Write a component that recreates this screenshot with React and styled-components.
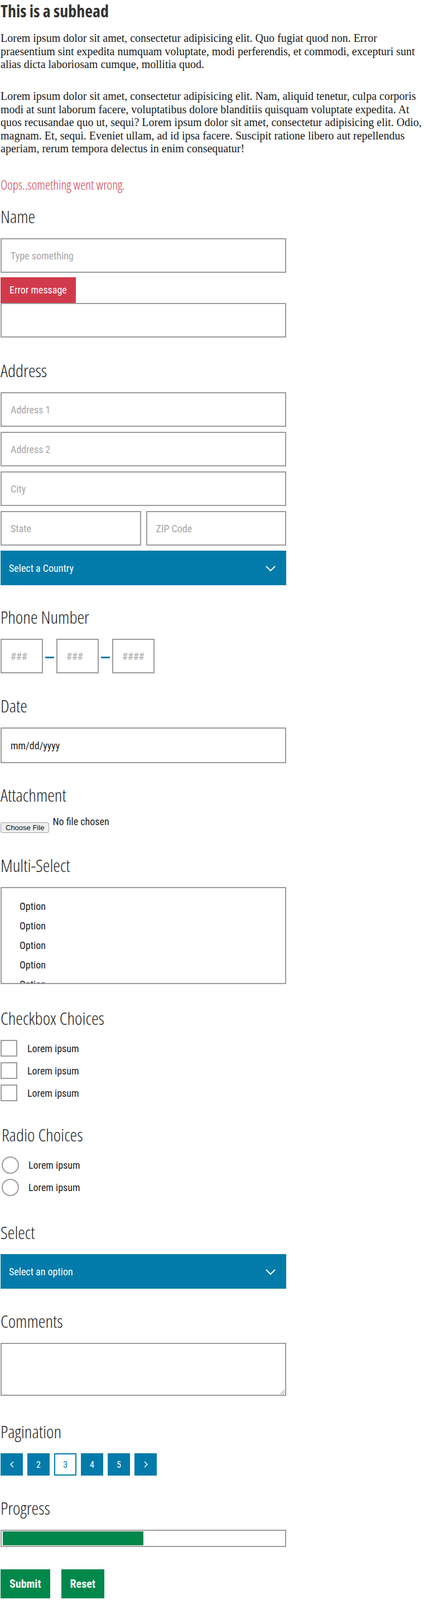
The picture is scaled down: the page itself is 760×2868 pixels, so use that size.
import React from 'react';
import styled, { createGlobalStyle } from 'styled-components';

// no Oswald here: the variable width axis of Open Sans / Roboto gives the condensed look
const displayFont = `font-family: "Open Sans", "Roboto", sans-serif; font-stretch: 75%; font-variation-settings: "wdth" 75;`;
const uiFont = `font-family: "Roboto", "Open Sans", sans-serif; font-stretch: 75%; font-variation-settings: "wdth" 75;`;
const serif = `"Liberation Serif", "DejaVu Serif", serif`;

const blue = '#027bab';
const green = '#00884b';
const red = '#d13a4b';
const line = '#9b9b9b';

const GlobalStyle = createGlobalStyle`
    * {
        box-sizing: border-box;
    }
    body {
        margin: 0;
        background: #fff;
        font-family: "Open Sans", sans-serif;
        color: #222;
    }
`;

const Page = styled.div`
    width: 760px;
    padding: 0 0 2px 1px;
`;

const Subhead = styled.h2`
    margin: 2px 0 0;
    ${displayFont}
    font-weight: 700;
    font-size: 30px;
    line-height: 36px;
    color: #333;
`;

const Copy = styled.p`
    margin: ${(p) => p.$top}px 0 0;
    font-family: ${serif};
    font-size: 20px;
    line-height: 23.5px;
    color: #1a1a1a;
`;

const Alert = styled.p`
    margin: 38.5px 0 0;
    ${displayFont}
    font-weight: 300;
    font-size: 23px;
    line-height: 28px;
    color: ${red};
`;

const Form = styled.form`
    display: flex;
    flex-direction: column;
    align-items: flex-start;
`;

const Section = styled.div`
    width: 512px;
    margin-top: ${(p) => p.$top}px;
    padding-left: ${(p) => p.$indent || 0}px;
`;

const Label = styled.h3`
    margin: 0 0 21px;
    ${displayFont}
    font-weight: 300;
    font-size: 32px;
    line-height: 36px;
    color: #1e1e1e;
`;

const Stack = styled.div`
    display: flex;
    flex-direction: column;
    gap: ${(p) => p.$gap}px;
`;

const Pair = styled.div`
    display: grid;
    grid-template-columns: 1fr 1fr;
    gap: 9px;
`;

const TextInput = styled.input`
    display: block;
    width: 100%;
    height: ${(p) => p.$height || 62}px;
    margin: 0;
    padding: 0 16px;
    border: 2px solid ${line};
    border-radius: 0;
    background: #fff;
    ${uiFont}
    font-size: 18px;
    color: #222;
    outline: none;

    &::placeholder {
        color: #a6a6a6;
    }
`;

const ErrorBadge = styled.div`
    align-self: flex-start;
    height: 46px;
    padding: 0 16px;
    background: ${red};
    color: #fff;
    ${uiFont}
    font-size: 18px;
    line-height: 46px;
`;

const ErrorField = styled.div`
    display: flex;
    flex-direction: column;
`;

const SelectWrap = styled.div`
    position: relative;
    width: 100%;
`;

const NativeSelect = styled.select`
    appearance: none;
    display: block;
    width: 100%;
    height: 62px;
    margin: 0;
    padding: 0 48px 0 15px;
    border: 0;
    border-radius: 0;
    background: ${blue};
    color: #fff;
    ${uiFont}
    font-size: 18px;
    outline: none;
`;

const Chevron = styled.svg`
    position: absolute;
    right: 19px;
    top: 50%;
    margin-top: -4px;
    pointer-events: none;
`;

const PhoneRow = styled.div`
    display: flex;
    align-items: center;
`;

const PhoneInput = styled(TextInput)`
    width: 76px;
`;

const Dash = styled.span`
    width: 16px;
    height: 3px;
    margin: 5px 4px 0;
    background: ${blue};
`;

const FileRow = styled.div`
    display: flex;
    align-items: flex-start;
    gap: 6px;
`;

const FileButton = styled.button`
    margin-top: 10px;
    height: 19px;
    padding: 0 8px;
    border: 1px solid #a3a3a3;
    border-radius: 3px;
    background: #efefef;
    font-family: "Liberation Sans", sans-serif;
    font-size: 13px;
    line-height: 17px;
    color: #111;
`;

const FileName = styled.span`
    ${uiFont}
    font-size: 18px;
    line-height: 18px;
    color: #222;
`;

const ListBox = styled.div`
    height: 174px;
    padding: 15px 0 0 32px;
    border: 2px solid ${line};
    overflow: hidden;
`;

const ListOption = styled.div`
    ${uiFont}
    font-size: 18px;
    line-height: 35px;
    color: #222;
`;

const Choices = styled.div`
    display: flex;
    flex-direction: column;
    gap: ${(p) => p.$gap}px;
`;

const Choice = styled.label`
    display: flex;
    align-items: center;
    gap: ${(p) => p.$gap}px;
    ${uiFont}
    font-size: 18px;
    color: #222;
`;

const Mark = styled.input`
    appearance: none;
    flex: none;
    width: ${(p) => p.$size}px;
    height: ${(p) => p.$size}px;
    margin: 0;
    border: 2px solid ${line};
    border-radius: ${(p) => (p.type === 'radio' ? '50%' : '0')};
    background: #fff;
`;

const TextArea = styled.textarea`
    display: block;
    width: 100%;
    height: 95px;
    margin: 0;
    padding: 12px 16px;
    border: 2px solid ${line};
    border-radius: 0;
    ${uiFont}
    font-size: 18px;
    outline: none;
`;

const Pager = styled.nav`
    display: flex;
    gap: 8px;
`;

const PageButton = styled.button`
    display: flex;
    align-items: center;
    justify-content: center;
    width: 40px;
    height: 40px;
    padding: 0;
    border: 2px solid ${blue};
    border-radius: 0;
    background: ${(p) => (p.$active ? '#fff' : blue)};
    color: ${(p) => (p.$active ? blue : '#fff')};
    ${uiFont}
    font-size: 16px;
`;

const ProgressTrack = styled.div`
    width: 512px;
    height: 31px;
    padding: 1px 2px;
    border: 2px solid ${line};
    background: #fff;
`;

const ProgressFill = styled.div`
    height: 100%;
    background: ${green};
`;

const Actions = styled.div`
    display: flex;
    gap: 20px;
    margin-top: 40px;
`;

const ActionButton = styled.button`
    height: 52px;
    padding: 0 16px;
    border: 0;
    border-radius: 0;
    background: ${green};
    color: #fff;
    ${uiFont}
    font-weight: 700;
    font-size: 20px;
`;

const Field = ({ label, top, indent, children }) => (
    <Section $top={top} $indent={indent}>
        <Label>{label}</Label>
        {children}
    </Section>
);

const Dropdown = ({ placeholder }) => (
    <SelectWrap>
        <NativeSelect defaultValue="">
            <option value="" disabled>
                {placeholder}
            </option>
            <option value="1">Option</option>
        </NativeSelect>
        <Chevron width="18" height="10" viewBox="0 0 18 10">
            <polyline
                points="1,1 9,9 17,1"
                fill="none"
                stroke="#fff"
                strokeWidth="2"
            />
        </Chevron>
    </SelectWrap>
);

const Arrow = ({ dir }) => (
    <svg width="7" height="12" viewBox="0 0 7 12">
        <polyline
            points={dir === 'left' ? '6,1 1,6 6,11' : '1,1 6,6 1,11'}
            fill="none"
            stroke="#fff"
            strokeWidth="1.5"
        />
    </svg>
);

const App = () => {
    const progress = 50;

    return (
        <Page>
            <GlobalStyle />
            <Subhead>This is a subhead</Subhead>
            <Copy $top={19}>
                Lorem ipsum dolor sit amet, consectetur adipisicing elit. Quo
                fugiat quod non. Error praesentium sint expedita numquam
                voluptate, modi perferendis, et commodi, excepturi sunt alias
                dicta laboriosam cumque, mollitia quod.
            </Copy>
            <Copy $top={33.5}>
                Lorem ipsum dolor sit amet, consectetur adipisicing elit. Nam,
                aliquid tenetur, culpa corporis modi at sunt laborum facere,
                voluptatibus dolore blanditiis quisquam voluptate expedita. At
                quos recusandae quo ut, sequi? Lorem ipsum dolor sit amet,
                consectetur adipisicing elit. Odio, magnam. Et, sequi. Eveniet
                ullam, ad id ipsa facere. Suscipit ratione libero aut
                repellendus aperiam, rerum tempora delectus in enim consequatur!
            </Copy>
            <Alert>Oops..something went wrong.</Alert>

            <Form onSubmit={(e) => e.preventDefault()}>
                <Field label="Name" top={25}>
                    <Stack $gap={8}>
                        <TextInput placeholder="Type something" />
                        <ErrorField>
                            <ErrorBadge>Error message</ErrorBadge>
                            <TextInput />
                        </ErrorField>
                    </Stack>
                </Field>

                <Field label="Address" top={41}>
                    <Stack $gap={9}>
                        <TextInput placeholder="Address 1" />
                        <TextInput placeholder="Address 2" />
                        <TextInput placeholder="City" />
                        <Pair>
                            <TextInput placeholder="State" />
                            <TextInput placeholder="ZIP Code" />
                        </Pair>
                        <Dropdown placeholder="Select a Country" />
                    </Stack>
                </Field>

                <Field label="Phone Number" top={39}>
                    <PhoneRow>
                        <PhoneInput placeholder="###" />
                        <Dash />
                        <PhoneInput placeholder="###" />
                        <Dash />
                        <PhoneInput placeholder="####" />
                    </PhoneRow>
                </Field>

                <Field label="Date" top={40}>
                    <TextInput $height={64} defaultValue="mm/dd/yyyy" />
                </Field>

                <Field label="Attachment" top={39}>
                    <FileRow>
                        <FileButton type="button">Choose File</FileButton>
                        <FileName>No file chosen</FileName>
                    </FileRow>
                </Field>

                <Field label="Multi-Select" top={40}>
                    <ListBox role="listbox">
                        {[1, 2, 3, 4, 5].map((n) => (
                            <ListOption key={n} role="option">
                                Option
                            </ListOption>
                        ))}
                    </ListBox>
                </Field>

                <Field label="Checkbox Choices" top={43}>
                    <Choices $gap={10}>
                        {[1, 2, 3].map((n) => (
                            <Choice key={n} $gap={18}>
                                <Mark type="checkbox" $size={30} />
                                Lorem ipsum
                            </Choice>
                        ))}
                    </Choices>
                </Field>

                <Field label="Radio Choices" top={42} indent={2}>
                    <Choices $gap={9}>
                        {[1, 2].map((n) => (
                            <Choice key={n} $gap={17}>
                                <Mark type="radio" name="radio" $size={31} />
                                Lorem ipsum
                            </Choice>
                        ))}
                    </Choices>
                </Field>

                <Field label="Select" top={47}>
                    <Dropdown placeholder="Select an option" />
                </Field>

                <Field label="Comments" top={40}>
                    <TextArea />
                </Field>

                <Field label="Pagination" top={46}>
                    <Pager>
                        <PageButton type="button" aria-label="Previous">
                            <Arrow dir="left" />
                        </PageButton>
                        {[2, 3, 4, 5].map((n) => (
                            <PageButton type="button" key={n} $active={n === 3}>
                                {n}
                            </PageButton>
                        ))}
                        <PageButton type="button" aria-label="Next">
                            <Arrow dir="right" />
                        </PageButton>
                    </Pager>
                </Field>

                <Field label="Progress" top={40}>
                    <ProgressTrack>
                        <ProgressFill style={{ width: `${progress}%` }} />
                    </ProgressTrack>
                </Field>

                <Actions>
                    <ActionButton type="submit">Submit</ActionButton>
                    <ActionButton type="reset">Reset</ActionButton>
                </Actions>
            </Form>
        </Page>
    );
};

export default App;
